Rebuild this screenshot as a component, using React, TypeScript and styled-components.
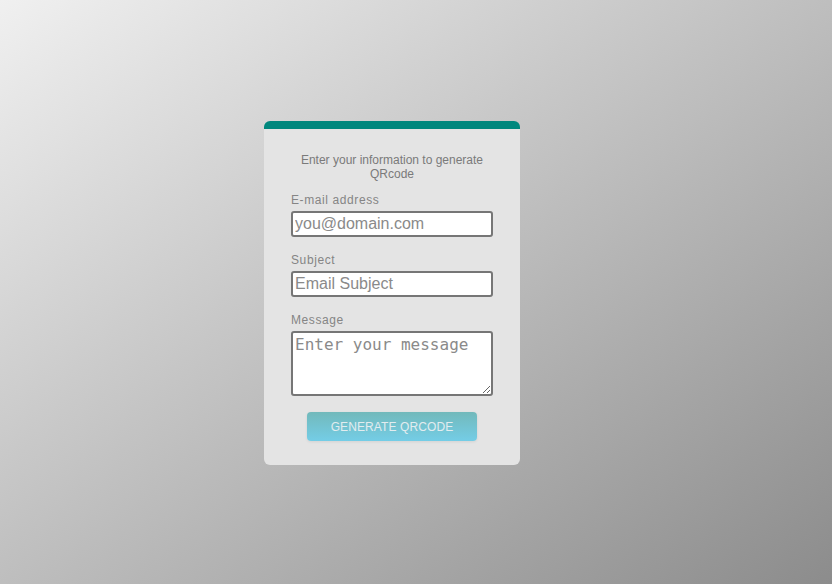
import React from "react";
import styled, { createGlobalStyle } from "styled-components";

const Global = createGlobalStyle`
  html, body { margin: 0; padding: 0; }
  body {
    font-family: "Liberation Sans", Arial, sans-serif;
    background: linear-gradient(to bottom right, #f0f0f0 0%, #8c8c8c 100%);
    min-height: 584px;
  }
`;

const Page = styled.div`
  min-height: 584px;
  display: flex;
  align-items: center;
  justify-content: center;
  padding-right: 48px;
  box-sizing: border-box;
`;

const Card = styled.form`
  width: 256px;
  box-sizing: border-box;
  background: #e4e4e4;
  border-top: 8px solid #00877d;
  border-radius: 6px;
  padding: 24px 27px 24px;
  display: flex;
  flex-direction: column;
  margin-top: 2px;
`;

const Intro = styled.p`
  margin: 0 0 12px;
  text-align: center;
  font-size: 12px;
  line-height: 14px;
  color: #7a7a7a;
`;

const Field = styled.div<{ $last?: boolean }>`
  display: flex;
  flex-direction: column;
  margin-bottom: ${(p) => (p.$last ? "16px" : "16px")};
`;

const Label = styled.label`
  font-size: 12px;
  line-height: 14px;
  letter-spacing: 0.6px;
  color: #858585;
  margin-bottom: 4px;
`;

const Input = styled.input`
  box-sizing: border-box;
  width: 202px;
  height: 26px;
  border: 2px solid #767676;
  border-radius: 3px;
  background: #fff;
  padding: 0 2px;
  font-family: "Liberation Sans", Arial, sans-serif;
  font-size: 16px;
  color: #333;
  outline: none;
  &::placeholder { color: #8a8a8a; }
`;

const TextArea = styled.textarea`
  box-sizing: border-box;
  width: 202px;
  height: 65px;
  border: 2px solid #767676;
  border-radius: 3px;
  background: #fff;
  padding: 2px 2px;
  font-family: "DejaVu Sans Mono", monospace;
  font-size: 16px;
  color: #333;
  outline: none;
  resize: vertical;
  &::placeholder { color: #8a8a8a; }
`;

const Button = styled.button`
  align-self: center;
  width: 170px;
  height: 29px;
  border: none;
  border-radius: 4px;
  background: linear-gradient(to bottom, #72b9bb 0%, #74cde6 100%);
  box-shadow: 0 1px 3px rgba(0, 0, 0, 0.08);
  color: #e2ecef;
  font-family: "Liberation Sans", Arial, sans-serif;
  font-size: 12px;
  letter-spacing: 0.1px;
  cursor: pointer;
`;

export default function App() {
  return (
    <>
      <Global />
      <Page>
        <Card onSubmit={(e) => e.preventDefault()}>
          <Intro>
            Enter your information to generate
            <br />
            QRcode
          </Intro>
          <Field>
            <Label htmlFor="email">E-mail address</Label>
            <Input id="email" type="email" placeholder="you@domain.com" />
          </Field>
          <Field>
            <Label htmlFor="subject">Subject</Label>
            <Input id="subject" type="text" placeholder="Email Subject" />
          </Field>
          <Field $last>
            <Label htmlFor="message">Message</Label>
            <TextArea id="message" placeholder="Enter your message" />
          </Field>
          <Button type="submit">GENERATE QRCODE</Button>
        </Card>
      </Page>
    </>
  );
}
